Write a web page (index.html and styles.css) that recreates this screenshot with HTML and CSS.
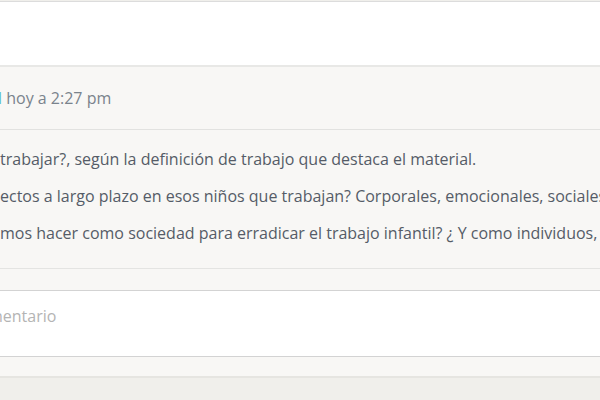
FILE: index.html
```html
<!DOCTYPE html>
<html lang="es">
<head>
  <meta charset="UTF-8">
  <title>Comentarios</title>
  <link rel="stylesheet" href="styles.css">
</head>
<body>

  <div class="entrada"></div>

  <div class="comentario">
    <div class="cabecera">
      <a class="autor" href="#">l</a> hoy a 2:27 pm
    </div>
    <div class="cuerpo">
      <p>trabajar?, según la definición de trabajo que destaca el material.</p>
      <p>ectos a largo plazo en esos niños que trabajan? Corporales, emocionales, sociales, intelectuales?</p>
      <p>mos hacer como sociedad para erradicar el trabajo infantil? ¿ Y como individuos, qué podemos hacer?</p>
    </div>
  </div>

  <div class="responder">
    <div class="caja"><span class="corte">n</span>entario</div>
  </div>

  <div class="pie"></div>

</body>
</html>
```

FILE: styles.css
```css
html, body {
  margin: 0;
  height: 100%;
  overflow: hidden;
}

body {
  font-family: 'Open Sans', sans-serif;
  font-size: 16px;
  line-height: 24px;
  background: #f0efeb;
}

.entrada {
  margin-top: 1px;
  border-top: 1px solid #dcdcdc;
  height: 63px;
  background: #ffffff;
}

.comentario {
  background: #f8f7f5;
  border-top: 2px solid #e8e8e6;
  border-bottom: 1px solid #e4e4e2;
}

.cabecera {
  padding: 19px 0;
  color: #7a838c;
  border-bottom: 1px solid #e2e2e0;
  white-space: nowrap;
}

.autor {
  color: #5bbcc6;
  text-decoration: none;
  margin-left: -2px;
}

.cuerpo {
  padding: 18px 0 9px;
  color: #555c67;
}

.cuerpo p {
  margin: 0 0 14px;
  line-height: 23px;
  white-space: nowrap;
}

.responder {
  background: #f8f7f5;
  padding: 21px 0 19px;
  border-bottom: 2px solid #e6e5e1;
}

.caja {
  background: #ffffff;
  border-top: 1px solid #d3d3d3;
  border-bottom: 1px solid #d3d3d3;
  height: 52px;
  padding-top: 13px;
  color: #b4b4b4;
  white-space: nowrap;
  overflow: hidden;
}

.corte {
  margin-left: -7px;
}

.pie {
  height: 30px;
}
```
